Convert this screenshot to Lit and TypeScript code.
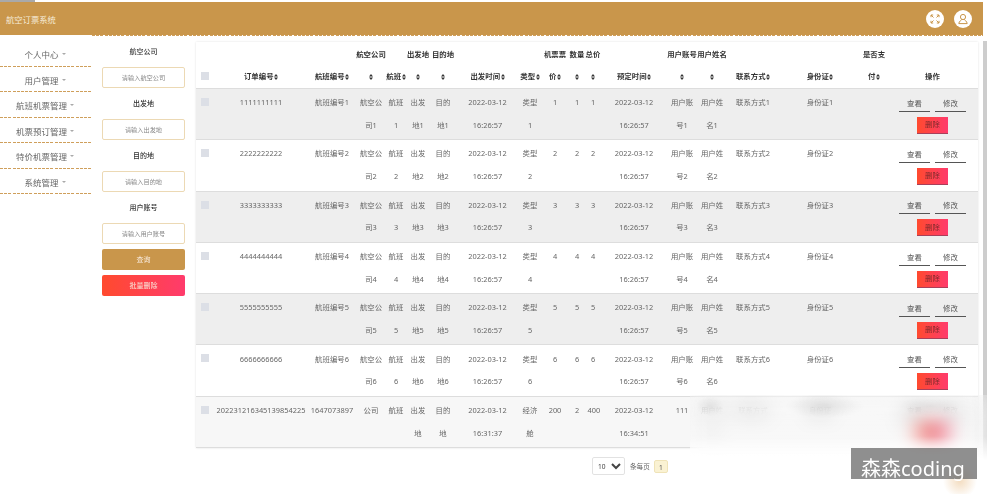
import { LitElement, html, css, svg } from "lit";
import { customElement } from "lit/decorators.js";

const menu = ["个人中心", "用户管理", "航班机票管理", "机票预订管理", "特价机票管理", "系统管理"];

const filters = [
  { label: "航空公司", hint: "请输入航空公司" },
  { label: "出发地", hint: "请输入出发地" },
  { label: "目的地", hint: "请输入目的地" },
  { label: "用户账号", hint: "请输入用户账号" },
];

// widths measured off the screenshot, they add up to 782
const columns = [
  { w: 18, title: "" },
  { w: 94, title: "订单编号", sort: true },
  { w: 48, title: "航班编号", sort: true },
  { w: 30, title: "航空公司", sort: true },
  { w: 20, title: "航班", sort: true },
  { w: 24, title: "出发地", sort: true },
  { w: 26, title: "目的地", sort: true },
  { w: 63, title: "出发时间", sort: true },
  { w: 22, title: "类型", sort: true },
  { w: 28, title: "机票票价", sort: true },
  { w: 16, title: "数量", sort: true },
  { w: 16, title: "总价", sort: true },
  { w: 66, title: "预定时间", sort: true },
  { w: 30, title: "用户账号", sort: true },
  { w: 30, title: "用户姓名", sort: true },
  { w: 52, title: "联系方式", sort: true },
  { w: 82, title: "身份证", sort: true },
  { w: 26, title: "是否支付", sort: true },
  { w: 91, title: "操作" },
];

const rows: string[][] = [1, 2, 3, 4, 5, 6].map((n) => [
  String(n).repeat(10),
  `航班编号${n}`,
  `航空公司${n}`,
  `航班${n}`,
  `出发地${n}`,
  `目的地${n}`,
  "2022-03-12 16:26:57",
  `类型${n}`,
  `${n}`,
  `${n}`,
  `${n}`,
  "2022-03-12 16:26:57",
  `用户账号${n}`,
  `用户姓名${n}`,
  `联系方式${n}`,
  `身份证${n}`,
  "",
]);

rows.push([
  "202231216345139854225",
  "1647073897",
  "公司",
  "航班",
  "出发地",
  "目的地",
  "2022-03-12 16:31:37",
  "经济舱",
  "200",
  "2",
  "400",
  "2022-03-12 16:34:51",
  "111",
  "用户姓名",
  "联系方式",
  "身份证",
  "",
]);

const sortIcon = svg`<svg class="sort" viewBox="0 0 4 6"><path d="M2 0 4 2.5H0ZM2 6 0 3.5H4Z" fill="#333" /></svg>`;

@customElement("app-root")
export class AppRoot extends LitElement {
  static styles = css`
    :host {
      display: block;
      position: relative;
      width: 987px;
      height: 494px;
      overflow: hidden;
      background: #fff;
      font-family: "Noto Sans", "Noto Sans CJK SC", sans-serif;
      font-size: 7.4px;
      color: #666;
    }
    .page {
      display: flex;
      height: 100%;
      filter: blur(0.45px);
    }
    .main {
      flex: 1;
      min-width: 0;
    }
    .scrollbar {
      width: 4px;
      margin-top: 41px;
      background: #cdcdcd;
    }
    .strip {
      width: 35px;
      height: 2px;
      background: #a9a9a9;
    }
    header {
      display: flex;
      align-items: center;
      height: 33px;
      padding: 0 11px 0 6px;
      background: #c9964b;
      color: #f6ecd9;
      font-size: 8.3px;
    }
    .title {
      flex: 1;
    }
    .round {
      display: flex;
      align-items: center;
      justify-content: center;
      width: 18px;
      height: 18px;
      margin-left: 10px;
      border-radius: 50%;
      background: #fff;
    }
    .round svg {
      width: 12px;
      height: 12px;
    }
    .body {
      display: flex;
    }
    .dash {
      background-image: repeating-linear-gradient(90deg, #cf9f5b 0 3px, transparent 3px 4.2px);
      background-repeat: no-repeat;
      background-size: 100% 1.4px;
    }
    nav {
      width: 92px;
      padding-top: 6.5px;
      flex: none;
    }
    nav .item {
      display: flex;
      align-items: center;
      justify-content: center;
      height: 25.5px;
      padding-right: 2px;
      font-size: 8.5px;
      background-position: 0 100%;
    }
    .caret {
      width: 0;
      height: 0;
      margin-left: 3px;
      border: 2px solid transparent;
      border-top: 2px solid #aaa;
      border-bottom: 0;
    }
    .content {
      flex: 1;
      display: flex;
      padding: 1px 5px 0 10px;
      background-position: 0 0;
    }
    .filters {
      width: 83px;
      flex: none;
      display: flex;
      flex-direction: column;
    }
    .filters label {
      height: 31px;
      line-height: 31px;
      text-align: center;
      font-size: 7px;
      font-weight: 500;
      color: #333;
    }
    .filters input {
      box-sizing: border-box;
      height: 21px;
      width: 100%;
      padding: 0;
      text-align: center;
      font: inherit;
      font-size: 6.2px;
      background: #fff;
      border: 1px solid #ecd9b4;
      border-radius: 2px;
      outline: none;
    }
    .filters input::placeholder {
      color: #888;
    }
    .filters button {
      height: 21px;
      margin-top: 5px;
      padding: 0;
      border: 0;
      border-radius: 2px;
      font: inherit;
      font-size: 7px;
      color: #f8e9dc;
    }
    .filters button.search {
      margin-top: 4.5px;
      background: #c9964b;
    }
    .bulk {
      background: linear-gradient(90deg, #ff4a2e, #ff3b6c);
    }
    .list {
      width: 782px;
      margin-left: 11px;
      padding-top: 6px;
    }
    table {
      width: 782px;
      table-layout: fixed;
      border-collapse: collapse;
      background: #fff;
      box-shadow: 0 0 2px rgba(0, 0, 0, 0.12);
      line-height: 22.7px;
    }
    th {
      height: 46px;
      padding: 0;
      vertical-align: bottom;
      font-weight: 700;
      color: #333;
      border-bottom: 1px solid #ddd;
    }
    tbody tr {
      height: 51.3px;
      background: #fff;
    }
    tbody tr:nth-child(odd) {
      background: #eee;
    }
    tbody tr:last-child {
      background: #f7f7f7;
    }
    td {
      padding: 2.2px 2.5px 0;
      vertical-align: top;
      text-align: center;
      border-bottom: 1px solid #ddd;
    }
    .sort {
      display: inline-block;
      width: 4px;
      height: 6px;
      margin-left: 0.5px;
      vertical-align: -0.5px;
    }
    .check {
      appearance: none;
      display: block;
      width: 8px;
      height: 8px;
      margin: 7px 0 0 5px;
      background: #dcdfe6;
    }
    th .check {
      margin-bottom: 8px;
    }
    td.pick {
      padding: 0;
    }
    td.pick .check {
      margin-top: 9px;
    }
    .actions {
      display: flex;
      flex-wrap: wrap;
      justify-content: center;
      gap: 5px;
      padding-top: 1.5px;
    }
    .actions button {
      box-sizing: border-box;
      height: 19px;
      width: 31px;
      padding: 3px 0 0;
      border: 0;
      border-bottom: 1px solid #555;
      background: transparent;
      font: inherit;
      line-height: 15px;
      color: #555;
    }
    .actions button.del {
      height: 17px;
      padding: 0;
      border-bottom: 1px solid #a8405a;
      background: linear-gradient(90deg, #ff4a2e, #ff3b6c);
      color: #7c2a2a;
    }
    .pager {
      display: flex;
      align-items: center;
      gap: 4px;
      padding: 9px 0 0 396px;
      font-size: 6.6px;
    }
    select {
      width: 33px;
      height: 18px;
      padding: 0 0 0 1px;
      margin-right: 1px;
      font: inherit;
      font-size: 6.6px;
      color: #444;
      background: #fff;
      border: 1px solid #e2e2e2;
      border-radius: 2px;
    }
    .current {
      width: 14px;
      height: 13px;
      line-height: 13px;
      text-align: center;
      background: #faf2d3;
      border: 1px solid #efe3b8;
      border-radius: 2px;
      box-sizing: border-box;
      color: #555;
    }
    .frost {
      position: absolute;
      left: 690px;
      top: 395px;
      right: 0;
      bottom: 0;
      backdrop-filter: blur(10px);
      background:
        radial-gradient(circle at 270px 86px, rgba(226, 170, 100, 0.4), rgba(226, 170, 100, 0) 17px),
        radial-gradient(ellipse 40px 12px at 135px 11px, rgba(0, 0, 0, 0.07), rgba(0, 0, 0, 0)),
        radial-gradient(ellipse 30px 10px at 240px 11px, rgba(0, 0, 0, 0.06), rgba(0, 0, 0, 0)),
        radial-gradient(ellipse 14px 10px at 20px 11px, rgba(0, 0, 0, 0.06), rgba(0, 0, 0, 0)),
        linear-gradient(rgba(255, 255, 255, 0.1), rgba(255, 255, 255, 0.15) 42%, #fff 66%);
    }
    .mark {
      position: absolute;
      left: 851px;
      top: 448px;
      width: 126px;
      height: 31px;
      box-sizing: border-box;
      padding-left: 10px;
      background: rgba(112, 112, 112, 0.78);
      color: #fff;
      font-size: 20px;
      line-height: 41px;
      white-space: nowrap;
    }
  `;

  private cell(value: string) {
    return html`<td>${value}</td>`;
  }

  render() {
    return html`
      <div class="page">
        <div class="main">
          <div class="strip"></div>
          <header>
            <div class="title">航空订票系统</div>
            <div class="round">
              <svg viewBox="0 0 12 12" fill="none" stroke="#c9964b" stroke-width="1">
                <path d="M4.5 4.5 2 2M2 4.2V2h2.2M7.5 4.5 10 2M7.8 2H10v2.2M4.5 7.5 2 10M2 7.8V10h2.2M7.5 7.5 10 10M10 7.8V10H7.8" />
              </svg>
            </div>
            <div class="round">
              <svg viewBox="0 0 12 12" fill="none" stroke="#c9964b" stroke-width="1">
                <circle cx="6" cy="4" r="2.6" />
                <path d="M4.6 6.4C4.6 7.6 2 7.8 1.8 10.6H10.2C10 7.8 7.4 7.6 7.4 6.4" />
              </svg>
            </div>
          </header>
          <div class="body">
            <nav>
              ${menu.map(
                (name) => html`<div class="item dash">${name}<span class="caret"></span></div>`
              )}
            </nav>
            <div class="content dash">
              <div class="filters">
                ${filters.map(
                  (f) => html`<label>${f.label}</label><input placeholder=${f.hint} />`
                )}
                <button class="search">查询</button>
                <button class="bulk">批量删除</button>
              </div>
              <div class="list">
                <table>
                  <colgroup>
                    ${columns.map((c) => html`<col style="width:${c.w}px" />`)}
                  </colgroup>
                  <thead>
                    <tr>
                      <th><input class="check" type="checkbox" /></th>
                      ${columns.slice(1).map(
                        (c) => html`<th>${c.title}${c.sort ? sortIcon : ""}</th>`
                      )}
                    </tr>
                  </thead>
                  <tbody>
                    ${rows.map(
                      (row) => html`
                        <tr>
                          <td class="pick"><input class="check" type="checkbox" /></td>
                          ${row.map((value) => this.cell(value))}
                          <td>
                            <div class="actions">
                              <button>查看</button>
                              <button>修改</button>
                              <button class="del">删除</button>
                            </div>
                          </td>
                        </tr>
                      `
                    )}
                  </tbody>
                </table>
                <div class="pager">
                  <select><option>10</option></select>
                  <span>条每页</span>
                  <span class="current">1</span>
                </div>
              </div>
            </div>
          </div>
        </div>
        <div class="scrollbar"></div>
      </div>
      <div class="frost"></div>
      <div class="mark">森森coding</div>
    `;
  }
}
